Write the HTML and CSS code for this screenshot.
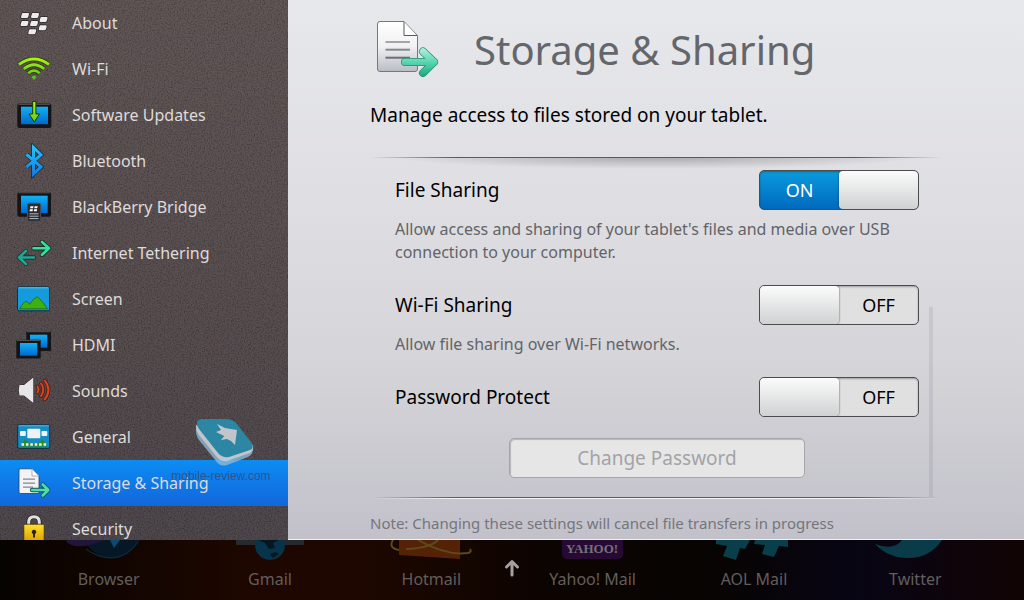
FILE: index.html
```html
<!DOCTYPE html>
<html lang="en">

<head>
    <meta charset="utf-8">
    <title>Storage &amp; Sharing</title>
    <link rel="stylesheet" href="styles.css">
</head>

<body>
    <!-- gradients shared by the icons -->
    <svg class="defs" width="0" height="0" aria-hidden="true">
        <defs>
            <linearGradient id="blue" x1="0" y1="0" x2="0" y2="1">
                <stop offset="0" stop-color="#12b0f5" />
                <stop offset="1" stop-color="#0069cc" />
            </linearGradient>
            <linearGradient id="lime" gradientUnits="userSpaceOnUse" x1="0" y1="4" x2="0" y2="30">
                <stop offset="0" stop-color="#b8fa14" />
                <stop offset="1" stop-color="#48c40c" />
            </linearGradient>
            <linearGradient id="sky" gradientUnits="userSpaceOnUse" x1="0" y1="2" x2="0" y2="34">
                <stop offset="0" stop-color="#25c8ff" />
                <stop offset="1" stop-color="#1277e0" />
            </linearGradient>
            <linearGradient id="paper" x1="0" y1="0" x2="0" y2="1">
                <stop offset="0" stop-color="#ffffff" />
                <stop offset="0.5" stop-color="#f1f1f3" />
                <stop offset="1" stop-color="#b9bcc4" />
            </linearGradient>
            <linearGradient id="mint" gradientUnits="userSpaceOnUse" x1="0" y1="28" x2="0" y2="56">
                <stop offset="0" stop-color="#b0f3da" />
                <stop offset="0.5" stop-color="#5ad6b0" />
                <stop offset="1" stop-color="#18ab85" />
            </linearGradient>
            <linearGradient id="gold" x1="0" y1="0" x2="0" y2="1">
                <stop offset="0" stop-color="#ffe02a" />
                <stop offset="1" stop-color="#d79a00" />
            </linearGradient>
            <filter id="grain" x="0" y="0" width="100%" height="100%">
                <feTurbulence type="fractalNoise" baseFrequency="0.7" numOctaves="2" seed="4" />
                <feColorMatrix values="0 0 0 0 0  0 0 0 0 0  0 0 0 0 0  1.6 0 0 0 -0.65" />
            </filter>
            <path id="key" d="M2 0h5q1.300 0 1 1.300l-.6 2.200Q7 5 5.500 5H1Q-.2 5 .1 3.700L.7 1.400Q1 0 2 0z" />
        </defs>
    </svg>

    <div class="settings">
        <nav class="sidebar">
            <svg class="grain" aria-hidden="true"><rect width="100%" height="100%" filter="url(#grain)" /></svg>
            <ul class="menu">
                <li><a href="#about">
                    <svg class="icon" viewBox="0 0 36 36">
                        <g fill="#ececee" stroke="#2c2627" stroke-width="1.500" paint-order="stroke">
                            <use href="#key" x="5" y="8" /><use href="#key" x="15" y="8" />
                            <use href="#key" x="23.500" y="12" /><use href="#key" x="4.500" y="16" />
                            <use href="#key" x="14" y="16" /><use href="#key" x="22.700" y="20.200" />
                            <use href="#key" x="12.200" y="24.200" />
                        </g>
                    </svg>About</a></li>
                <li><a href="#wifi">
                    <svg class="icon" viewBox="0 0 36 36">
                        <g fill="none" stroke="#2b3410" stroke-width="4.400">
                            <path d="M3 13.500Q18 2.500 33 13.500M7.800 18Q18 9.500 28.200 18M12.300 22.200Q18 17 23.700 22.200" />
                        </g>
                        <g fill="none" stroke="url(#lime)" stroke-width="2.800">
                            <path d="M3 13.500Q18 2.500 33 13.500M7.800 18Q18 9.500 28.200 18M12.300 22.200Q18 17 23.700 22.200" />
                        </g>
                        <path d="M15.500 26Q18 23.500 20.500 26L18 29z" fill="#5cc40f" />
                    </svg>Wi-Fi</a></li>
                <li><a href="#updates">
                    <svg class="icon" viewBox="0 0 36 36">
                        <rect x="1.300" y="6.500" width="34" height="24.500" rx="2" fill="#151517" />
                        <path d="M2.500 7.300h31.500" stroke="#5b5859" />
                        <rect x="5" y="9.700" width="27" height="17.500" fill="url(#blue)" />
                        <path d="M16.700 4.500h3.200V17h3.600L18.300 25 13 17h3.700z" fill="url(#lime)" stroke="#173808" stroke-width="1" />
                    </svg>Software Updates</a></li>
                <li><a href="#bluetooth">
                    <svg class="icon" viewBox="0 0 36 36">
                        <path d="M10.500 11.500L25 23.800L17.500 31V4.500L25 11.800L10.500 24" fill="none" stroke="#1d2a3a" stroke-width="4.600" />
                        <path d="M10.500 11.500L25 23.800L17.500 31V4.500L25 11.800L10.500 24" fill="none" stroke="url(#sky)" stroke-width="3" />
                    </svg>Bluetooth</a></li>
                <li><a href="#bridge">
                    <svg class="icon" viewBox="0 0 36 36">
                        <rect x="1.300" y="3" width="33.700" height="24.700" rx="2" fill="#151517" />
                        <path d="M2.500 3.800h31.300" stroke="#5b5859" />
                        <rect x="5" y="6.700" width="26.700" height="17.500" fill="url(#blue)" />
                        <rect x="11.500" y="14.300" width="13.200" height="18" rx="2" fill="#2a2c31" stroke="#4c4f56" />
                        <path d="M14.500 17.200h3l-.5 2h-3zM18.700 17.200h3l-.5 2h-3zM14 20.200h3l-.5 2h-3zM18.200 20.200h3l-.5 2h-3z" fill="#fff" />
                        <path d="M13.500 24.800h9M13.500 27.200h9M13.500 29.600h9" stroke="#b8bbc0" />
                    </svg>BlackBerry Bridge</a></li>
                <li><a href="#tethering">
                    <svg class="icon" viewBox="0 0 36 36">
                        <g fill="none" stroke="#1f2f2a" stroke-width="4.400" stroke-linecap="round" stroke-linejoin="round">
                            <path d="M17.500 13.300H33M26 7l7 6.300-7 6.500M18 22.500H3M10 16l-7 6.500 7 6.500" />
                        </g>
                        <g fill="none" stroke-width="2.600" stroke-linecap="round" stroke-linejoin="round">
                            <path d="M17.500 13.300H33M26 7l7 6.300-7 6.500" stroke="#2fe39a" />
                            <path d="M18 22.500H3M10 16l-7 6.500 7 6.500" stroke="#1fa795" />
                        </g>
                    </svg>Internet Tethering</a></li>
                <li><a href="#screen">
                    <svg class="icon" viewBox="0 0 36 36">
                        <rect x="1.500" y="5.800" width="32" height="24" rx="1.500" fill="#149bdc" stroke="#122f44" />
                        <path d="M2.500 6.800h30" stroke="#5cc6f2" />
                        <path d="M3.500 27.800Q8 20.500 10 20.200Q11.500 20.500 13.500 23.300Q19 16 21.300 16Q24 17 31.500 27.800z" fill="#3fb00e" stroke="#1b6a1a" stroke-width=".8" />
                    </svg>Screen</a></li>
                <li><a href="#hdmi">
                    <svg class="icon" viewBox="0 0 36 36">
                        <rect x="10.300" y="4" width="24.700" height="20" rx="1" fill="#151517" />
                        <path d="M11 4.700h23.500" stroke="#5b5859" />
                        <rect x="14" y="7.700" width="17.300" height="13" fill="url(#blue)" />
                        <rect x=".3" y="12.700" width="24.400" height="18.800" rx="1" fill="#151517" />
                        <path d="M1 13.400h23" stroke="#5b5859" />
                        <rect x="4" y="16" width="17.300" height="12.700" fill="url(#blue)" />
                    </svg>HDMI</a></li>
                <li><a href="#sounds">
                    <svg class="icon" viewBox="0 0 36 36">
                        <path d="M3.500 12H8L17.300 4.500V30L8 22.500H3.500Q2 17 3.500 12z" fill="#e6e6e8" stroke="#2c2627" stroke-width="1" paint-order="stroke" />
                        <g fill="none" stroke="#43201a" stroke-width="3.600" stroke-linecap="round">
                            <path d="M21.500 13.500q2 3 0 6M25 10.500q4.500 6 0 12.500M28.700 7.500q7.500 9.500 0 19" />
                        </g>
                        <g fill="none" stroke="#e2421c" stroke-width="2" stroke-linecap="round">
                            <path d="M21.500 13.500q2 3 0 6M25 10.500q4.500 6 0 12.500M28.700 7.500q7.500 9.500 0 19" />
                        </g>
                    </svg>Sounds</a></li>
                <li><a href="#general">
                    <svg class="icon" viewBox="0 0 36 36">
                        <rect x="1.700" y="5.800" width="32" height="23.500" rx="1.500" fill="#148cc4" stroke="#102c40" />
                        <path d="M2.500 6.800h30.500" stroke="#50bdec" />
                        <path d="M4 27.500L9 20.500 13 24h9.500L26.500 20.500 31.500 27.500z" fill="#2f8c18" />
                        <rect x="11.300" y="9.700" width="13" height="9.500" rx="1" fill="#eef2f4" />
                        <rect x="4" y="12" width="5.800" height="5" rx="1" fill="#eef2f4" />
                        <rect x="25.500" y="12" width="5.800" height="5" rx="1" fill="#eef2f4" />
                        <path d="M5.500 25.500h25" stroke="#e9f6df" stroke-width="2.600" stroke-dasharray="2.600 1.800" />
                    </svg>General</a></li>
                <li><a class="active" href="#storage">
                    <svg class="icon" viewBox="0 0 36 36">
                        <path d="M4.500 3.800H16L23 11V28.500H4.500Q3 28.500 3 27V5.300Q3 3.800 4.500 3.800z" fill="#f3f3f5" stroke="#23415f" stroke-width=".8" />
                        <path d="M16 3.800V11h7z" fill="#fff" stroke="#9a9ca2" stroke-width=".8" />
                        <path d="M7 14.200h12M7 18.200h12M7 22.200h10" stroke="#85878c" stroke-width="1.200" />
                        <path d="M16 25H32M26.700 19.500L32.300 25 26.700 30.500" fill="none" stroke="#125848" stroke-width="4.400" stroke-linecap="round" stroke-linejoin="round" />
                        <path d="M16 25H32M26.700 19.500L32.300 25 26.700 30.500" fill="none" stroke="#4fdcae" stroke-width="2.600" stroke-linecap="round" stroke-linejoin="round" />
                    </svg>Storage &amp; Sharing</a></li>
                <li><a href="#security">
                    <svg class="icon" viewBox="0 0 36 36">
                        <path d="M12.700 15V11q0-5.300 5.300-5.300t5.300 5.300v4" fill="none" stroke="#2c2627" stroke-width="4.600" />
                        <path d="M12.700 15V11q0-5.300 5.300-5.300t5.300 5.300v4" fill="none" stroke="#e0e0e3" stroke-width="3" />
                        <rect x="7.800" y="13.200" width="20.400" height="19" rx="1" fill="url(#gold)" stroke="#3a2c0a" stroke-width=".8" />
                        <path d="M18 18.700a2.200 2.200 0 0 1 1 4.200V26.500h-2V22.900A2.200 2.200 0 0 1 18 18.700z" fill="#2d2408" />
                    </svg>Security</a></li>
            </ul>
            <div class="watermark">
                <svg width="60" height="48" viewBox="0 0 60 48">
                    <path d="M1 8Q0 15 4 21L21 42Q25 48 32 46L53 38Q59 35 58 27z" fill="#8fb9d6" />
                    <path d="M1 6Q1 12 4 16L21 37Q25 43 32 42L55 34Q59 31 58 26z" fill="#dfe5ea" />
                    <path d="M6 0H31Q37 0 41 4L56 23Q60 29 55 31L34 38Q27 39 23 34L4 10Q-1 2 6 0z" fill="#2497bb" />
                    <path d="M22 5L30 9 42 11 40 26 36 22 32 20 26 21 29.300 17 21 13 26 11z" fill="#dfe5ea" />
                </svg>
                <span>mobile-review.com</span>
            </div>
        </nav>

        <main class="panel">
            <header class="panel-header">
                <svg width="64" height="58" viewBox="0 0 64 58" aria-hidden="true">
                    <path d="M4 1.500H28L41.500 15.500V49Q41.500 51.500 39 51.500H4Q1.500 51.500 1.500 49V4Q1.500 1.500 4 1.500z" fill="url(#paper)" stroke="#74777d" />
                    <path d="M28 2V15.500H41" fill="#fff" stroke="#55585d" />
                    <path d="M9.500 22H34" stroke="#a2a5aa" stroke-width="2" />
                    <path d="M9.500 29.700H34" stroke="#85888e" stroke-width="2" />
                    <path d="M9.500 37.700H34" stroke="#6b6f75" stroke-width="2" />
                    <g fill="none" stroke-linecap="round" stroke-linejoin="round">
                        <path d="M29 42H58M47 31.500L58 42 47 53" stroke="#2b8a72" stroke-width="8" />
                        <path d="M29 42H58M47 31.500L58 42 47 53" stroke="url(#mint)" stroke-width="6.600" />
                    </g>
                </svg>
                <h1>Storage &amp; Sharing</h1>
            </header>
            <p class="intro">Manage access to files stored on your tablet.</p>

            <form class="options">
                <div class="option">
                    <label for="fileSharing">File Sharing</label>
                    <span class="switch">
                        <input type="checkbox" id="fileSharing" checked>
                        <span class="on">ON</span><span class="off">OFF</span><span class="knob"></span>
                    </span>
                    <p>Allow access and sharing of your tablet's files and media over USB connection to your computer.</p>
                </div>
                <div class="option">
                    <label for="wifiSharing">Wi-Fi Sharing</label>
                    <span class="switch">
                        <input type="checkbox" id="wifiSharing">
                        <span class="on">ON</span><span class="off">OFF</span><span class="knob"></span>
                    </span>
                    <p>Allow file sharing over Wi-Fi networks.</p>
                </div>
                <div class="option">
                    <label for="passwordProtect">Password Protect</label>
                    <span class="switch">
                        <input type="checkbox" id="passwordProtect">
                        <span class="on">ON</span><span class="off">OFF</span><span class="knob"></span>
                    </span>
                </div>
                <button type="button" class="change" disabled>Change Password</button>
                <div class="scrollbar"></div>
            </form>

            <p class="note">Note: Changing these settings will cancel file transfers in progress</p>
        </main>
    </div>

    <footer class="dock">
        <a href="#browser">
            <svg width="90" height="26" viewBox="0 0 90 26">
                <path d="M18 0H76Q64 18 48 18 34 18 26 8z" fill="#061826" />
                <path d="M2 1Q8 9 26 5L42 0H4z" fill="#21153b" />
                <path d="M46 0l4 8 6-8z" fill="#0b4a72" />
                <path d="M22 9Q34 18 48 18 64 17 74 2" fill="none" stroke="#0a3345" />
            </svg>Browser</a>
        <a href="#gmail">
            <svg width="90" height="26" viewBox="0 0 90 26">
                <rect x="11" y="-4" width="68" height="9" rx="1" fill="#252b2d" />
                <circle cx="45" cy="5" r="15" fill="#07344a" />
                <path d="M33 0l7 3 4 6 6-1-2-5 6-3zM45 14l6-2 3 2-6 4z" fill="#061621" />
            </svg>Gmail</a>
        <a href="#hotmail">
            <svg width="90" height="26" viewBox="0 0 90 26">
                <path d="M13 0H74V19L13 15z" fill="#552107" />
                <path d="M13 10Q2 8 7 0M32 0Q60 16 82 13 86 12 84 9M20 9Q44 8 52 0" fill="none" stroke="#5c4a18" stroke-width="2" />
            </svg>Hotmail</a>
        <a href="#yahoo">
            <svg width="90" height="26" viewBox="0 0 90 26">
                <rect x="14" y="-20" width="61" height="39" rx="5" fill="#260a33" />
                <text class="yahoo" x="44" y="13" text-anchor="middle">YAHOO!</text>
            </svg>Yahoo! Mail</a>
        <a href="#aol">
            <svg width="90" height="26" viewBox="0 0 90 26">
                <path d="M7 0H41L36 9 31 8 27 20 14 16 18 6 7 4z" fill="#083f4a" />
                <path d="M46 0H79V7L70 6 65 17 53 14 56 5 45 4z" fill="#083f4a" />
            </svg>AOL Mail</a>
        <a href="#twitter">
            <svg width="90" height="26" viewBox="0 0 90 26">
                <path d="M5 4Q24 11 32 0H72Q60 18 38 18 18 18 5 4z" fill="#0a3b49" />
            </svg>Twitter</a>
        <svg class="up" width="16" height="18" viewBox="0 0 16 18">
            <path d="M8 16V3M2.500 8L8 2.500 13.500 8" fill="none" stroke="#a5a19f" stroke-width="3" stroke-linecap="round" stroke-linejoin="round" />
        </svg>
    </footer>
</body>

</html>
```
FILE: styles.css
```css
* {
    box-sizing: border-box;
}

body {
    font-family: "Noto Sans", "Open Sans", sans-serif;
    margin: 0;
    height: 100vh;
    display: flex;
    flex-direction: column;
    background-color: #0c0300;
    overflow: hidden;
}

h1,
p,
ul {
    margin: 0;
    padding: 0;
}

.defs {
    position: absolute;
}

.settings {
    flex: 1;
    min-height: 0;
    display: flex;
}

/* left menu */
.sidebar {
    position: relative;
    width: 288px;
    flex: none;
    overflow: hidden;
    background: linear-gradient(#625757, #5a5051 50%, #4f484d);
}

.grain {
    position: absolute;
    width: 100%;
    height: 100%;
    opacity: 0.4;
}

.menu {
    position: relative;
    list-style: none;
}

.menu a {
    display: flex;
    align-items: center;
    gap: 20px;
    height: 46px;
    padding-left: 16px;
    font-size: 16px;
    color: #dedbda;
    text-decoration: none;
}

.menu a.active {
    background: linear-gradient(#0c8df2, #1266dc);
}

.icon {
    width: 36px;
    height: 36px;
}

.watermark {
    position: absolute;
    left: 171px;
    top: 419px;
    opacity: 0.8;
    font-family: "Liberation Sans", sans-serif;
    font-size: 12px;
    line-height: 18px;
    white-space: nowrap;
    color: #34486e;
}

.watermark svg {
    display: block;
    margin-left: 24px;
}

/* right side */
.panel {
    flex: 1;
    min-width: 0;
    display: flex;
    flex-direction: column;
    padding: 20px 82px 0;
    background: linear-gradient(#e7e8eb, #dedee2 40%, #d6d6da 65%, #c2c1ca);
    border-bottom: 1px solid #f2f2f4;
}

.panel-header {
    display: flex;
    align-items: center;
    gap: 34px;
    height: 58px;
    padding-left: 6px;
}

h1 {
    font-size: 40px;
    font-weight: normal;
    color: #63676b;
}

.intro {
    margin-top: 24px;
    font-size: 19px;
    line-height: 26px;
}

.options {
    position: relative;
    flex: 1;
    min-height: 0;
    margin-top: 29px;
    padding: 13px 23px 0 25px;
    background:
        linear-gradient(90deg, transparent, #5a5b60 15%, #5a5b60 85%, transparent) top / 100% 1px no-repeat,
        linear-gradient(90deg, transparent, #5a5b60 15%, #5a5b60 85%, transparent) 0 calc(100% - 1px) / 100% 1px no-repeat,
        linear-gradient(90deg, transparent, #f4f4f6 15%, #f4f4f6 85%, transparent) bottom / 100% 1px no-repeat,
        radial-gradient(ellipse 46% 12px at 50% 0, rgba(0, 0, 0, 0.25), transparent);
}

.option {
    display: grid;
    grid-template-columns: 1fr 160px;
    align-items: center;
    row-gap: 8px;
    margin-bottom: 21px;
}

.option label {
    font-size: 19px;
}

.option p {
    grid-column: 1 / 3;
    max-width: 500px;
    font-size: 16px;
    line-height: 23px;
    color: #626468;
}

.switch {
    position: relative;
    display: grid;
    grid-template-columns: 1fr 1fr;
    align-items: center;
    height: 40px;
    font-size: 18px;
    text-align: center;
    border: 1px solid #4a4c50;
    border-radius: 5px;
    background-color: #e0e0e0;
    box-shadow: inset 0 1px 2px rgba(0, 0, 0, 0.3);
    overflow: hidden;
}

.switch input {
    position: absolute;
    inset: 0;
    width: 100%;
    height: 100%;
    margin: 0;
    opacity: 0;
}

.switch .on {
    display: none;
    color: #fff;
}

.knob {
    order: -1;
    height: 38px;
    border-radius: 4px;
    background: linear-gradient(#fcfcfc, #cfd1d2);
    box-shadow: 0 0 2px #333;
}

.switch:has(:checked) {
    background: linear-gradient(#0a9bdd, #0069be);
}

.switch :checked ~ .on {
    display: block;
}

.switch :checked ~ .off {
    display: none;
}

.switch :checked ~ .knob {
    order: 1;
}

.change {
    display: block;
    width: 296px;
    height: 40px;
    margin: 0 auto;
    padding: 0;
    font-family: inherit;
    font-size: 19px;
    color: #a3a3a6;
    background-color: #e6e6e7;
    border: 1px solid #a5a6aa;
    border-radius: 5px;
    box-shadow: inset 1px 1px 1px #b5b5b8;
}

.scrollbar {
    position: absolute;
    right: 9px;
    bottom: 2px;
    width: 4px;
    height: 190px;
    background-color: rgba(110, 110, 125, 0.15);
}

.note {
    padding: 12px 0 4px;
    font-size: 15px;
    line-height: 24px;
    color: #74757b;
}

/* launcher strip */
.dock {
    position: relative;
    height: 60px;
    flex: none;
    display: grid;
    grid-template-columns: repeat(6, 1fr);
    padding: 0 28px;
    background: linear-gradient(90deg, #070301, #1e0700 25%, #1d0700 36%, #0d0401 52%, #070403 70%, #080514 84%, #120404);
}

.dock a {
    display: flex;
    flex-direction: column;
    align-items: center;
    font-size: 16px;
    line-height: 26px;
    color: #625e5c;
    text-decoration: none;
}

.yahoo {
    font-family: "Liberation Serif", serif;
    font-size: 13px;
    font-weight: bold;
    fill: #77707c;
}

.up {
    position: absolute;
    left: calc(50% - 8px);
    top: 19px;
}
```
